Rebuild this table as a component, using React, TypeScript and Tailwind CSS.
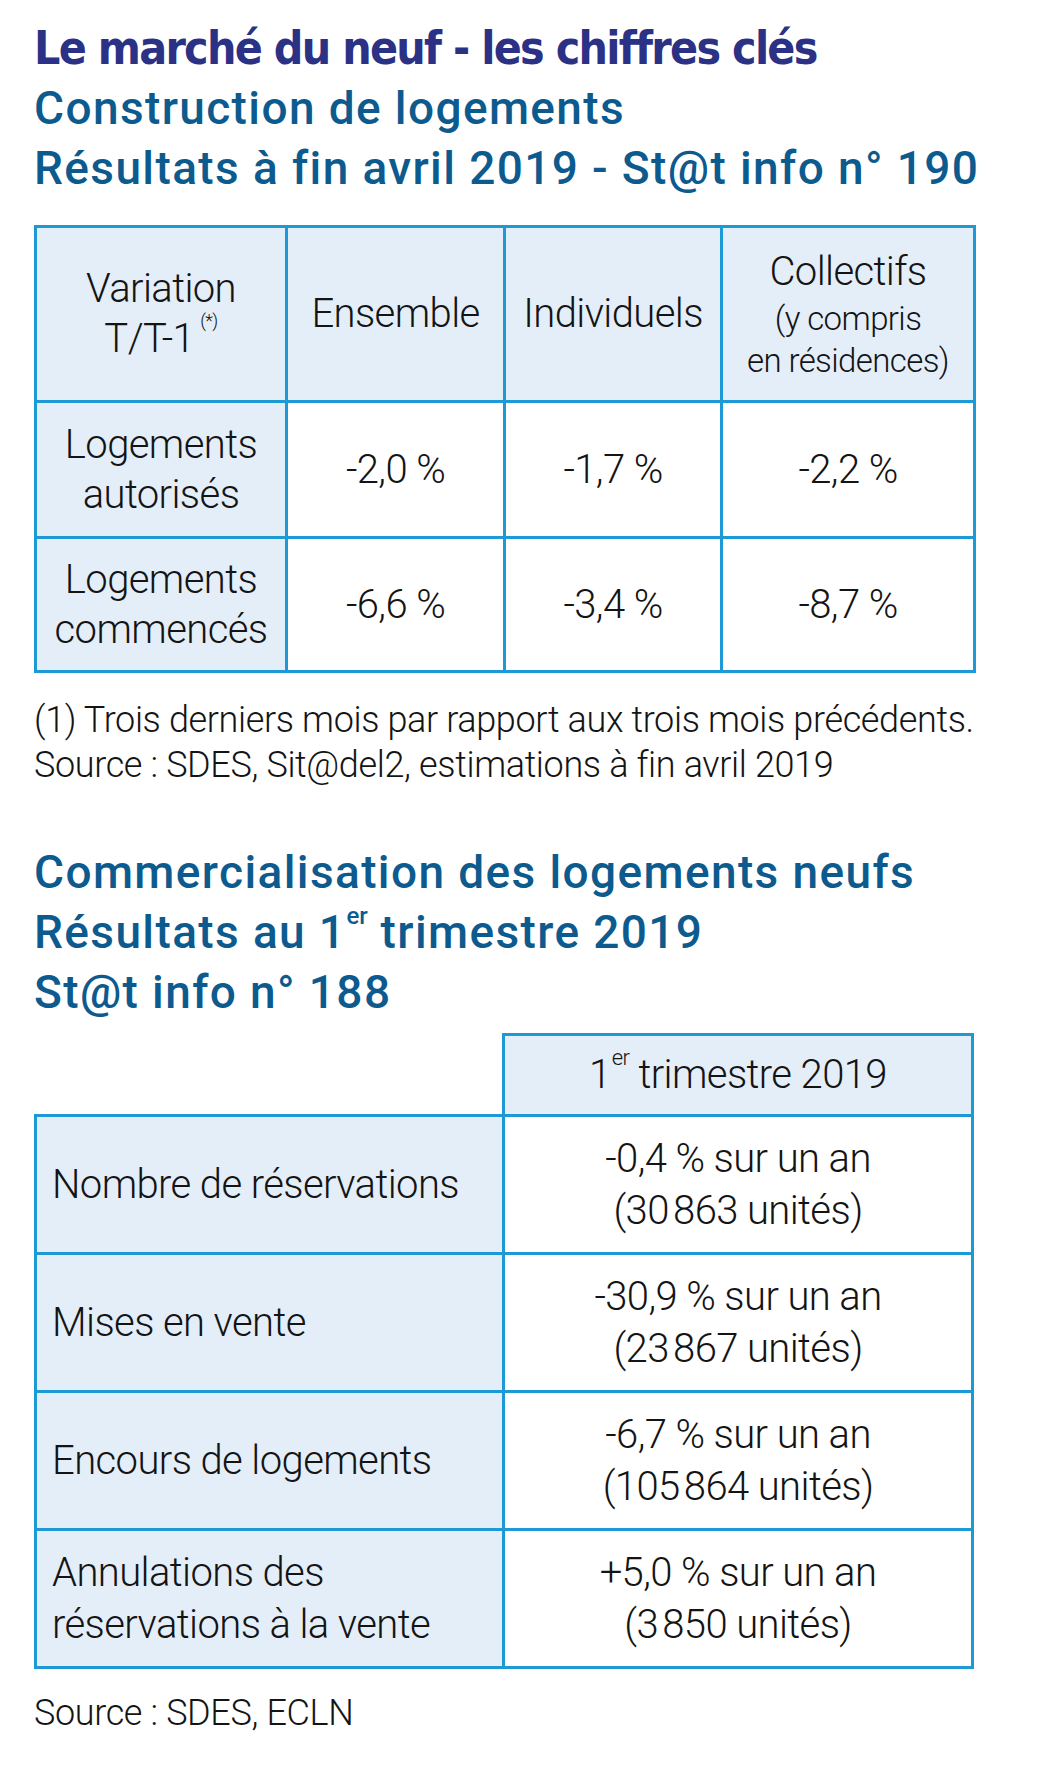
import React from "react";

const NNBSP = "\u202F";

const BODY_ROWS = [
  { label: ["Logements", "autorisés"], values: ["-2,0 %", "-1,7 %", "-2,2 %"], h: "h-[136px]" },
  { label: ["Logements", "commencés"], values: ["-6,6 %", "-3,4 %", "-8,7 %"], h: "h-[134px]" },
];

const SALES_ROWS = [
  { label: ["Nombre de réservations"], value: "-0,4 % sur un an", units: `(30${NNBSP}863 unités)` },
  { label: ["Mises en vente"], value: "-30,9 % sur un an", units: `(23${NNBSP}867 unités)` },
  { label: ["Encours de logements"], value: "-6,7 % sur un an", units: `(105${NNBSP}864 unités)` },
  { label: ["Annulations des", "réservations à la vente"], value: "+5,0 % sur un an", units: `(3${NNBSP}850 unités)` },
];

export default function App() {
  return (
    <div className="w-[1037px] min-h-[1780px] bg-white pl-[34px] pt-[18px] font-['Roboto',sans-serif] font-light text-[#141414]">
      {/* Titles */}
      <h1 className="font-['DejaVu_Sans_Condensed','DejaVu_Sans',sans-serif] [font-stretch:condensed] font-bold text-[46px] leading-[60px] text-[#2b3185] tracking-[-0.037em]">
        Le marché du neuf - les chiffres clés
      </h1>
      <h2 className="text-[46px] leading-[60px] font-medium text-[#0d5b8e] tracking-[0.03em]">
        Construction de logements
        <br />
        Résultats à fin avril 2019 - St@t info n° 190
      </h2>

      {/* Construction table */}
      <table className="mt-[27px] w-[939px] table-fixed border-collapse text-[40px] leading-[50px] tracking-[-0.015em]">
        <colgroup>
          <col className="w-[251px]" />
          <col className="w-[218px]" />
          <col className="w-[217px]" />
          <col className="w-[253px]" />
        </colgroup>
        <thead>
          <tr className="h-[175px] bg-[#e4eef9]">
            <th className="border-[3px] border-[#1d9ad6] font-light text-center align-middle">
              Variation
              <br />
              T/T-1<sup className="ml-[6px] text-[18px] align-[16px]">(*)</sup>
            </th>
            <th className="border-[3px] border-[#1d9ad6] font-light text-center align-middle">Ensemble</th>
            <th className="border-[3px] border-[#1d9ad6] font-light text-center align-middle">Individuels</th>
            <th className="border-[3px] border-[#1d9ad6] font-light text-center align-middle">
              <div>Collectifs</div>
              <div className="text-[33px] leading-[44px]">(y compris</div>
              <div className="text-[33px] leading-[40px]">en résidences)</div>
            </th>
          </tr>
        </thead>
        <tbody>
          {BODY_ROWS.map((row) => (
            <tr key={row.label.join(" ")} className={row.h}>
              <td className="border-[3px] border-[#1d9ad6] bg-[#e4eef9] text-center align-middle">
                {row.label[0]}
                <br />
                {row.label[1]}
              </td>
              {row.values.map((v, i) => (
                <td key={i} className="border-[3px] border-[#1d9ad6] bg-white text-center align-middle">
                  {v}
                </td>
              ))}
            </tr>
          ))}
        </tbody>
      </table>

      <p className="mt-[25px] text-[36px] leading-[45px] tracking-[-0.01em]">
        (1) Trois derniers mois par rapport aux trois mois précédents.
        <br />
        Source : SDES, Sit@del2, estimations à fin avril 2019
      </p>

      {/* Sales section */}
      <h2 className="mt-[54px] text-[46px] leading-[60px] font-medium text-[#0d5b8e] tracking-[0.03em]">
        Commercialisation des logements neufs
        <br />
        Résultats au 1<sup className="text-[24px] align-[12px] tracking-normal">er</sup> trimestre 2019
        <br />
        St@t info n° 188
      </h2>

      <table className="mt-[11px] w-[937px] table-fixed border-collapse text-[40px] leading-[52px] tracking-[-0.015em]">
        <colgroup>
          <col className="w-[468px]" />
          <col className="w-[469px]" />
        </colgroup>
        <thead>
          <tr className="h-[81px]">
            <th className="p-0" />
            <th className="border-[3px] border-[#1d9ad6] bg-[#e4eef9] font-light text-center align-middle">
              1<sup className="ml-[1px] text-[22px] align-[12px]">er</sup> trimestre 2019
            </th>
          </tr>
        </thead>
        <tbody>
          {SALES_ROWS.map((row) => (
            <tr key={row.value} className="h-[138px]">
              <td className="border-[3px] border-[#1d9ad6] bg-[#e4eef9] pl-[15px] text-left align-middle">
                {row.label.map((l) => (
                  <div key={l}>{l}</div>
                ))}
              </td>
              <td className="border-[3px] border-[#1d9ad6] bg-white text-center align-middle">
                <div>{row.value}</div>
                <div>{row.units}</div>
              </td>
            </tr>
          ))}
        </tbody>
      </table>

      <p className="mt-[22px] text-[36px] leading-[45px] tracking-[-0.01em]">
        Source : SDES, ECLN
      </p>
    </div>
  );
}
